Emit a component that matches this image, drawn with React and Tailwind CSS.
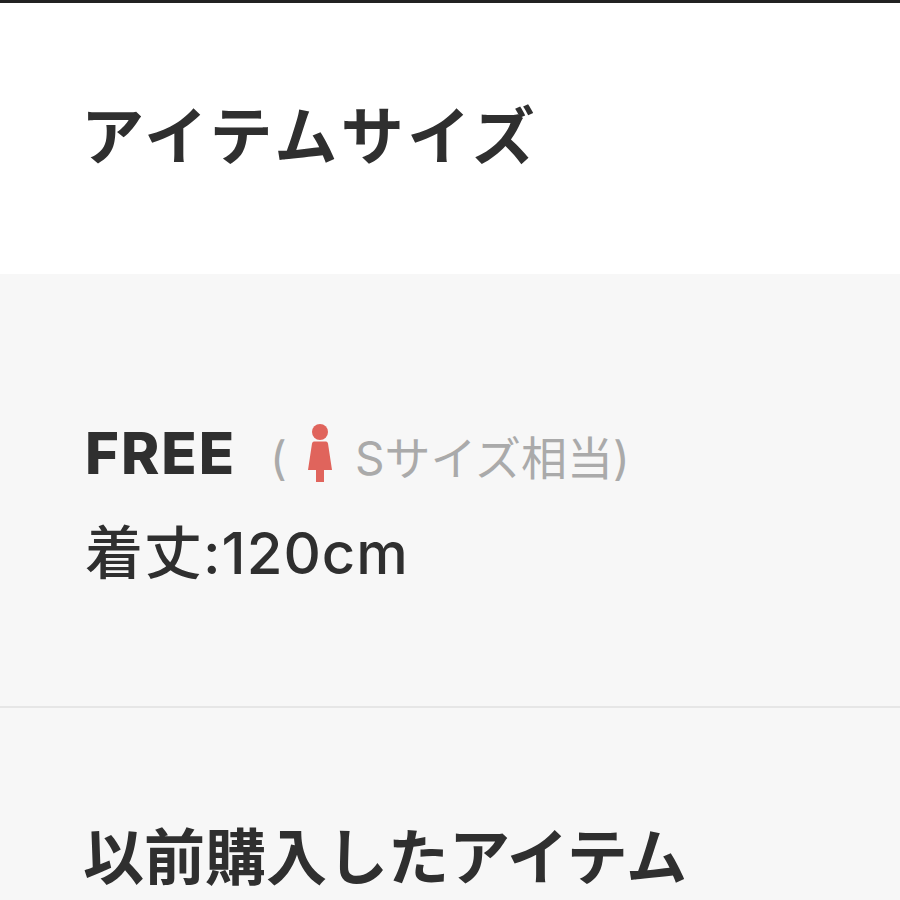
const CJK = "font-['Inter','Noto_Sans_CJK_JP',sans-serif]";

function WomanIcon() {
  return (
    <svg viewBox="0 0 24 58" className="mt-[-10px] mr-[23px] ml-[21px] h-[58px] w-6 shrink-0">
      <circle cx="12" cy="8" r="8" fill="#e0645c" />
      <path d="M6 17.500h12q1.500 0 2 2L24 46h-8v12H8V46H0l4-26.500q.5-2 2-2z" fill="#e0645c" />
    </svg>
  );
}

export default function App() {
  return (
    <div className={`h-[900px] w-[900px] overflow-hidden bg-[#f7f7f7] text-[#2f2f2f] ${CJK}`}>
      <div className="h-[3px] bg-[#222]" />
      <section className="h-[271px] bg-white px-[81px] pt-[95px]">
        <h1 className="text-[63px] leading-[76px] font-bold tracking-[3.5px]">アイテムサイズ</h1>
      </section>
      <section className="h-[434px] border-b-2 border-[#e6e6e6] px-[85px] pt-[146px]">
        <div className="flex h-[66px] items-center">
          <span className="text-[58px] leading-none font-extrabold tracking-[2px]">FREE</span>
          <span className="mt-[10px] ml-[34px] flex items-center text-[46px] text-[#aaa]">
            (
            <WomanIcon />
            Sサイズ相当)
          </span>
        </div>
        <p className="mt-[29px] text-[58px] leading-[76px] font-medium tracking-[1px]">着丈:120cm</p>
      </section>
      <section className="px-[83px] pt-[112px]">
        <h2 className="text-[61px] leading-[76px] font-bold">以前購入したアイテム</h2>
      </section>
    </div>
  );
}
